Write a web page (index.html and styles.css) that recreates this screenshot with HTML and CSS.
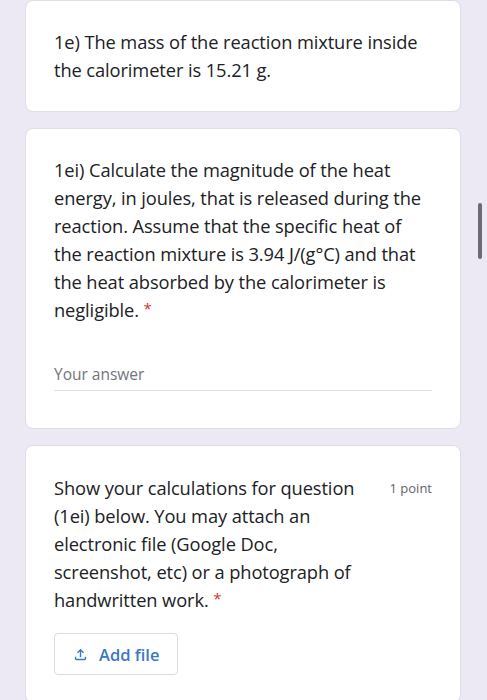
FILE: index.html
```html
<!DOCTYPE html>
<html>
<head>
<meta charset="utf-8">
<link rel="stylesheet" href="styles.css">
</head>
<body>
<div class="page">
  <div class="card card-first">
    <div class="title strong">1e) The mass of the reaction mixture inside the calorimeter is 15.21 g.</div>
  </div>
  <div class="card card-q">
    <div class="title">1ei) Calculate the magnitude of the heat energy, in joules, that is released during the reaction. Assume that the specific heat of the reaction mixture is 3.94 J/(g°C) and that the heat absorbed by the calorimeter is negligible. <span class="req">*</span></div>
    <div class="answer">Your answer</div>
  </div>
  <div class="card card-file">
    <div class="head">
      <div class="title narrow">Show your calculations for question (1ei) below. You may attach an electronic file (Google Doc, screenshot, etc) or a photograph of handwritten work. <span class="req">*</span></div>
      <div class="points">1 point</div>
    </div>
    <button class="add-file">
      <svg class="upload" viewBox="0 0 24 24" width="17" height="17"><path d="M18 15v3H6v-3H4v3c0 1.1.9 2 2 2h12c1.1 0 2-.9 2-2v-3h-2zM7 9l1.41 1.41L11 7.83V16h2V7.83l2.59 2.58L17 9l-5-5-5 5z" fill="#3a78c9"/></svg>
      <span>Add file</span>
    </button>
  </div>
  <div class="scrollbar"></div>
</div>
</body>
</html>
```
FILE: styles.css
```css
html, body {
  margin: 0;
  padding: 0;
  background: #ece8f4;
}
body {
  font-family: "Open Sans", "Roboto", sans-serif;
  color: #202124;
}
.page {
  width: 487px;
  height: 700px;
  overflow: hidden;
  position: relative;
  padding: 0 26px 0 25px;
  box-sizing: border-box;
  display: flex;
  flex-direction: column;
  gap: 16px;
}
.card {
  background: #fff;
  border: 1px solid #dedde3;
  border-radius: 8px;
  padding: 27px 28px 27px 28px;
  flex-shrink: 0;
}
.card-first {
  height: 112px;
  box-sizing: border-box;
}
.title {
  font-size: 18.3px;
  line-height: 28px;
  letter-spacing: -0.1px;
}
.strong {
  font-weight: 500;
}
.req {
  color: #d93025;
  font-size: 15px;
  line-height: 0;
  vertical-align: top;
  position: relative;
  top: 12px;
}
.answer {
  margin-top: 40px;
  font-size: 15.5px;
  line-height: 20px;
  color: #70757a;
  padding-bottom: 6px;
  border-bottom: 1px solid #e0e0e0;
  margin-bottom: 10px;
}
.head {
  display: flex;
  justify-content: space-between;
  align-items: flex-start;
  padding-top: 1px;
}
.narrow {
  width: 318px;
}
.points {
  font-size: 13px;
  line-height: 28px;
  color: #5f6368;
}
.add-file {
  margin-top: 19px;
  height: 42px;
  width: 124px;
  background: #fff;
  border: 1px solid #dadce0;
  border-radius: 4px;
  display: flex;
  align-items: center;
  gap: 10px;
  padding: 0 0 0 17px;
  font-family: "Open Sans", "Roboto", sans-serif;
  font-size: 16.5px;
  font-weight: 600;
  color: #3a78c9;
}
.upload {
  display: block;
}
.scrollbar {
  position: absolute;
  left: 478px;
  top: 203px;
  width: 4px;
  height: 56px;
  border-radius: 2px;
  background: #6d6a73;
}
```
